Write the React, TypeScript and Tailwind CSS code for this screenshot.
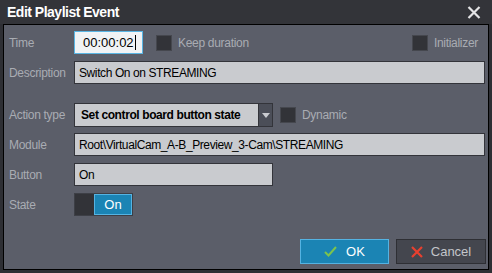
import React from 'react';

const font = { fontFamily: '"Liberation Sans", Arial, sans-serif' };

function Label({ text }: { text: string }) {
    return <div className="w-[70px] shrink-0 pl-[5px] text-[12px] tracking-[-0.3px] text-[#a9acb3]">{text}</div>;
}

function Check({ label }: { label: string }) {
    return (
        <div className="flex items-center gap-[6px]">
            <div className="w-[16px] h-[16px] bg-[#323338] border border-[#45474e]" />
            <span className="text-[12px] tracking-[-0.3px] text-[#a9acb3]">{label}</span>
        </div>
    );
}

export default function App() {
    return (
        <div className="w-[492px] h-[273px] bg-[#2e2f34] flex flex-col" style={font}>
            <div className="h-[24px] flex items-center justify-between pl-[7px] pr-[11px] bg-[#333439]">
                <span className="text-[14px] font-bold tracking-[-0.5px] text-white">Edit Playlist Event</span>
                <svg width="14" height="13" viewBox="0 0 14 13">
                    <path d="M1.5 1 L12.5 12 M12.5 1 L1.5 12" stroke="#e4e4e6" strokeWidth="2.2" />
                </svg>
            </div>

            <div className="ml-[3px] mr-[3px] mb-[3px] flex-1 border border-black bg-[#5b5e69] flex flex-col pr-[3px] pt-[6px]">
                <div className="flex items-center h-[23px]">
                    <Label text="Time" />
                    <div className="w-[69px] h-[23px] bg-[#f1f3f5] border border-[#5ab6e4] flex items-center pl-[8px] text-[13px] text-black">
                        00:00:02<span className="inline-block w-px h-[15px] bg-black ml-px" />
                    </div>
                    <div className="ml-[13px]"><Check label="Keep duration" /></div>
                    <div className="ml-auto mr-[7px]"><Check label="Initializer" /></div>
                </div>

                <div className="flex items-center h-[23px] mt-[7px]">
                    <Label text="Description" />
                    <div className="flex-1 h-[23px] bg-[#c9cbcf] border border-[#33343a] flex items-center pl-[4px] text-[12px] tracking-[-0.4px] text-black">Switch On on STREAMING</div>
                </div>

                <div className="flex items-center h-[24px] mt-[19px]">
                    <Label text="Action type" />
                    <div className="w-[199px] h-[24px] flex border border-[#33343a]">
                        <div className="flex-1 bg-[#c9cbcf] flex items-center pl-[6px] text-[12px] font-bold tracking-[-0.4px] text-black">Set control board button state</div>
                        <div className="w-[14px] bg-[#4b4e58] border-l border-[#33343a] flex items-center justify-center">
                            <svg width="8" height="5" viewBox="0 0 8 5"><path d="M0 0 H8 L4 5 Z" fill="#c9cbd0" /></svg>
                        </div>
                    </div>
                    <div className="ml-[7px]"><Check label="Dynamic" /></div>
                </div>

                <div className="flex items-center h-[23px] mt-[6px]">
                    <Label text="Module" />
                    <div className="flex-1 h-[23px] bg-[#c9cbcf] border border-[#33343a] flex items-center pl-[4px] text-[12px] tracking-[-0.4px] text-black">Root\VirtualCam_A-B_Preview_3-Cam\STREAMING</div>
                </div>

                <div className="flex items-center h-[23px] mt-[7px]">
                    <Label text="Button" />
                    <div className="w-[199px] h-[23px] bg-[#c9cbcf] border border-[#33343a] flex items-center pl-[4px] text-[12px] tracking-[-0.4px] text-black">On</div>
                </div>

                <div className="flex items-center h-[23px] mt-[7px]">
                    <Label text="State" />
                    <div className="w-[59px] h-[23px] flex border border-[#3d3f46]">
                        <div className="w-[19px] bg-[#323338]" />
                        <div className="flex-1 bg-[#1b84b4] border border-[#55b3e2] flex items-center justify-center text-[13px] text-white">On</div>
                    </div>
                </div>

                <div className="flex justify-end gap-[7px] mt-[23px] mr-[-1px]">
                    <div className="w-[89px] h-[25px] bg-[#1b84b4] border border-[#55b3e2] flex items-center justify-center gap-[9px] text-[13px] text-white">
                        <svg width="13" height="11" viewBox="0 0 13 11"><path d="M1 6 L4.5 9.5 L12 1" fill="none" stroke="#7cc34e" strokeWidth="2" /></svg>
                        <span>OK</span>
                    </div>
                    <div className="w-[90px] h-[25px] bg-[#44464e] border border-[#2e2f34] flex items-center justify-center gap-[8px] text-[13px] text-[#c3c5ca]">
                        <svg width="12" height="12" viewBox="0 0 12 12"><path d="M1 1 L11 11 M11 1 L1 11" stroke="#e8402f" strokeWidth="2.2" /></svg>
                        <span>Cancel</span>
                    </div>
                </div>
            </div>
        </div>
    );
}
